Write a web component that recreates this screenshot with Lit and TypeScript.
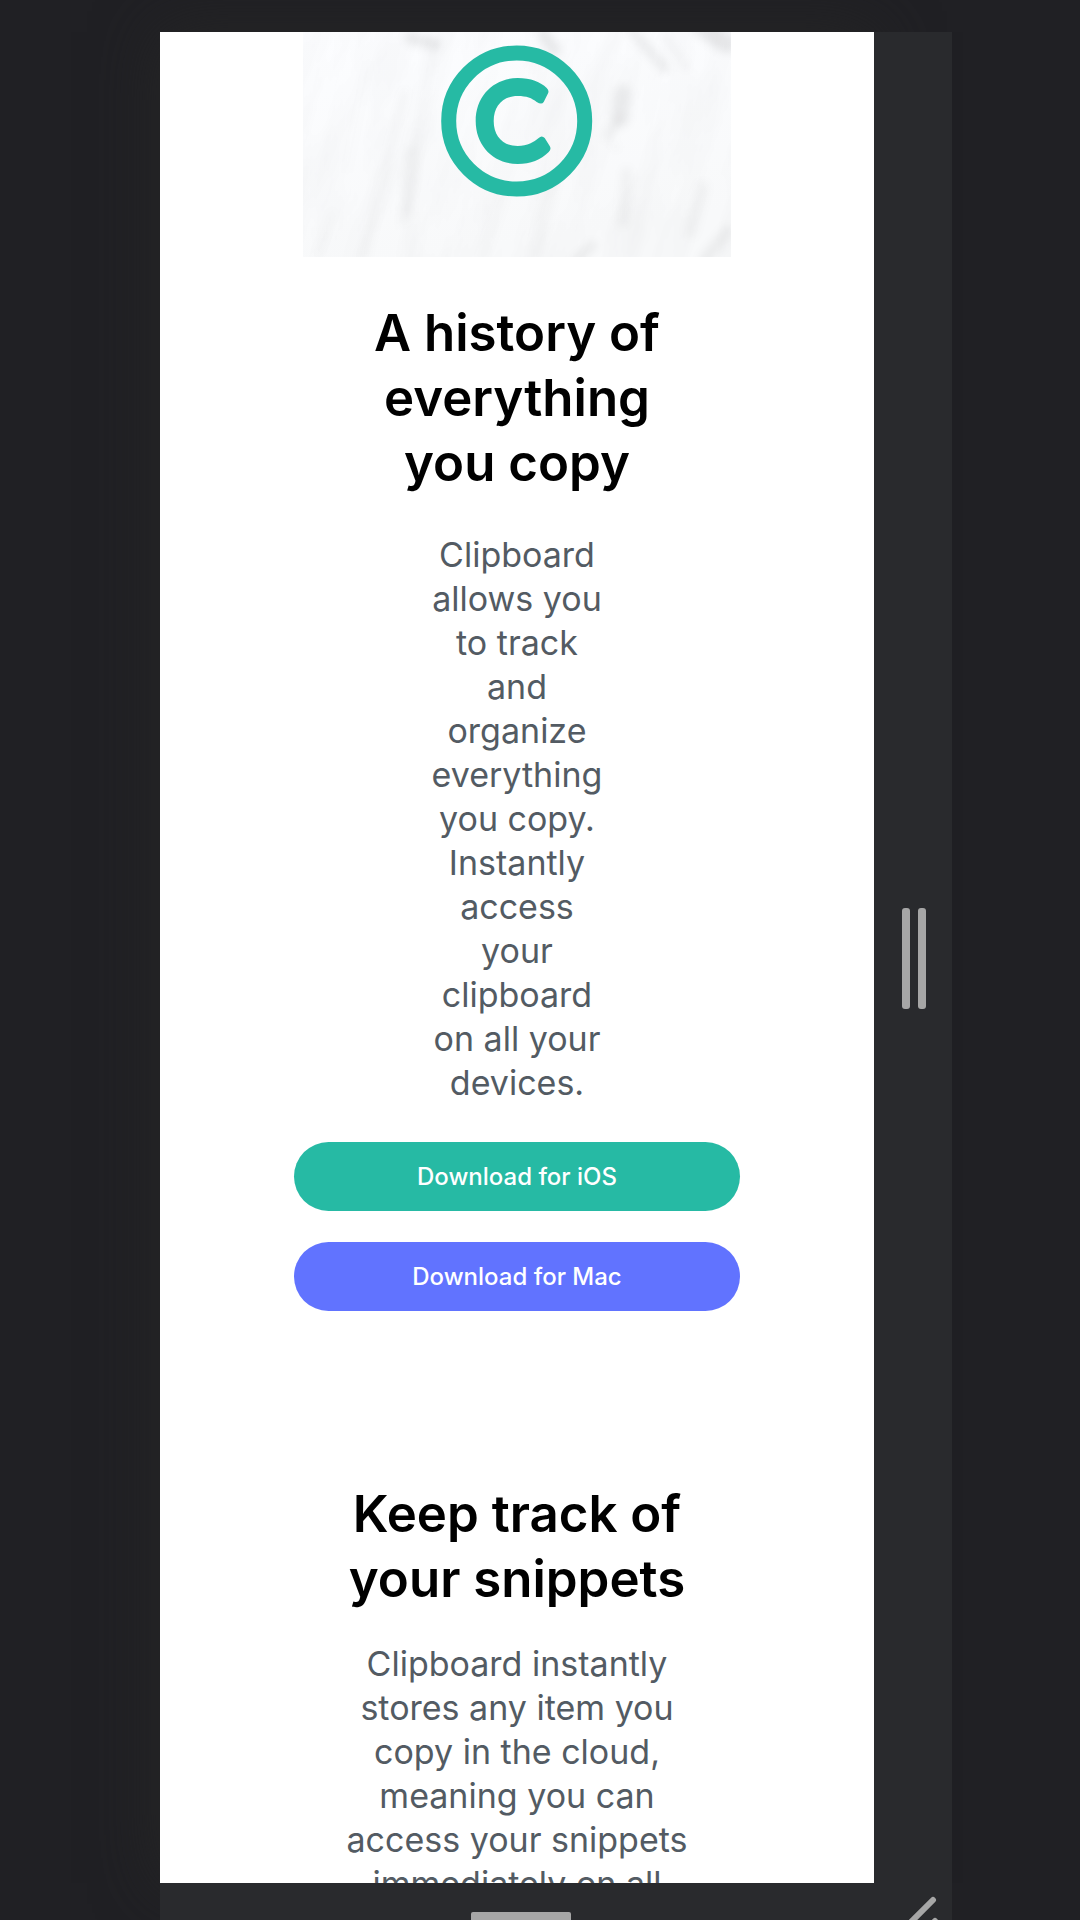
import { LitElement, html, css, svg } from "lit";
import { customElement } from "lit/decorators.js";

const heroLines = ["A history of", "everything", "you copy"];
const introLines = [
  "Clipboard", "allows you", "to track", "and", "organize", "everything", "you copy.",
  "Instantly", "access", "your", "clipboard", "on all your", "devices.",
];
const trackLines = ["Keep track of", "your snippets"];
const trackCopy = [
  "Clipboard instantly", "stores any item you", "copy in the cloud,",
  "meaning you can", "access your snippets", "immediately on all",
];

const lines = (items: string[]) => items.map((t, i) => (i ? html`<br />${t}` : t));

// Brush marks of the marble backdrop: x1, y1, x2, y2, width, opacity.
const streaks: [number, number, number, number, number, number][] = [
  [108, 6, 132, 12, 12, 0.07],
  [132, 10, 102, 190, 5, 0.03],
  [102, 60, 62, 225, 6, 0.03],
  [66, 30, 44, 140, 3, 0.025],
  [108, 120, 104, 180, 12, 0.025],
  [240, 2, 252, 18, 12, 0.07],
  [226, 20, 230, 36, 4, 0.04],
  [330, 0, 362, 36, 10, 0.06],
  [362, 4, 384, 36, 5, 0.04],
  [400, -4, 424, 12, 18, 0.08],
  [320, 62, 318, 86, 18, 0.05],
  [318, 86, 304, 104, 10, 0.035],
  [313, 113, 313, 117, 3, 0.07],
  [324, 140, 320, 190, 10, 0.035],
  [400, 155, 388, 200, 12, 0.03],
  [290, 213, 272, 230, 8, 0.06],
  [425, 200, 402, 228, 12, 0.05],
  [30, 180, 14, 225, 5, 0.025],
  [250, 150, 232, 225, 12, 0.025],
  [200, 165, 180, 225, 10, 0.015],
];

@customElement("app-root")
export class AppRoot extends LitElement {
  static styles = css`
    :host {
      display: block;
      font-family: Inter, "Open Sans", sans-serif;
    }
    .stage {
      display: grid;
      grid-template-columns: 160fr 714fr 78fr 128fr;
      grid-template-rows: 32px minmax(0, 1fr) 37px;
      height: 100vh;
      overflow: hidden;
      background: #202024;
    }
    .screen {
      grid-area: 2 / 2;
      display: flex;
      flex-direction: column;
      align-items: center;
      min-height: 0;
      overflow: hidden;
      background: #fff;
      box-shadow: 0 0 60px #262626;
      text-align: center;
      white-space: nowrap;
    }
    .side {
      grid-area: 2 / 3;
      display: flex;
      align-items: center;
      justify-content: center;
      gap: 8px;
      padding: 2px 0 0 2px;
      background: #292a2d;
      z-index: 1;
    }
    .side i {
      width: 8px;
      height: 101px;
      border-radius: 3px;
      background: #a6a6a6;
    }
    .foot {
      grid-area: 3 / 2 / 4 / 4;
      display: grid;
      grid-template-columns: 722fr 70fr;
      background: #292a2d;
      z-index: 1;
      overflow: hidden;
    }
    .grip {
      justify-self: center;
      width: 100px;
      height: 8px;
      margin-top: 29px;
      border-radius: 2px 2px 0 0;
      background: #a6a6a6;
    }
    .corner {
      justify-self: center;
      width: 48px;
      height: 37px;
    }
    .picture {
      flex: none;
      display: block;
      width: 60%;
      height: 225px;
    }
    h1, h2, p {
      margin: 0;
      flex: none;
    }
    h1, h2 {
      font-size: 51px;
      line-height: 65px;
      font-weight: 600;
      color: #000;
    }
    p {
      font-size: 34px;
      line-height: 44px;
      color: #535b63;
    }
    h1 { margin-top: 43px; }
    .intro { margin-top: 38px; }
    h2 { margin-top: 170px; }
    .copy { margin-top: 31px; }
    .actions {
      flex: none;
      display: flex;
      flex-direction: column;
      gap: 31px;
      width: 446px;
      max-width: 90%;
      margin-top: 37px;
    }
    button {
      height: 69px;
      border: 0;
      border-radius: 35px;
      font: 500 24px/32px Inter, "Open Sans", sans-serif;
      color: #fff;
      cursor: pointer;
    }
    .ios { background: #26baa4; }
    .mac { background: #6173ff; }
  `;

  render() {
    return html`
      <div class="stage">
        <main class="screen">
          <svg class="picture" viewBox="0 0 429 225" preserveAspectRatio="xMidYMid slice" role="img" aria-label="Clipboard logo">
            <defs>
              <filter id="soft" filterUnits="userSpaceOnUse" x="-20" y="-20" width="470" height="270"><feGaussianBlur stdDeviation="4" /></filter>
              <filter id="grain" filterUnits="userSpaceOnUse" x="-200" y="-200" width="900" height="700">
                <feTurbulence type="fractalNoise" baseFrequency="0.03 0.008" numOctaves="5" seed="7" />
                <feColorMatrix values="0 0 0 0 0.4  0 0 0 0 0.4  0 0 0 0 0.42  0.15 0 0 0 -0.055" />
              </filter>
              <linearGradient id="base" x1="0" y1="0" x2="0.3" y2="1">
                <stop offset="0" stop-color="#fcfdff" />
                <stop offset="1" stop-color="#f8f9fa" />
              </linearGradient>
            </defs>
            <rect width="429" height="225" fill="url(#base)" />
            <g transform="rotate(16 214 112)">
              <rect x="-200" y="-200" width="900" height="700" filter="url(#grain)" />
            </g>
            <g filter="url(#soft)" stroke="#000" stroke-linecap="round">
              ${streaks.map(([x1, y1, x2, y2, w, o]) => svg`<line x1=${x1} y1=${y1} x2=${x2} y2=${y2} stroke-width=${w} stroke-opacity=${o} />`)}
            </g>
            <circle cx="214" cy="89" r="68" fill="none" stroke="#26baa4" stroke-width="15" />
            <path
              d="M215 46C228 46 238 50 244 56Q247 59 245 62L241 70Q239 73 234 70C229 66 224 64 215 64C200 64 191 74 191 89C191 104 200 114 215 114C225 114 231 110 236 106Q239 103 242 106L247 114Q249 117 246 120C238 128 228 132 215 132C191 132 173 114 173 89C173 64 191 46 215 46Z"
              fill="#26baa4"
            />
          </svg>
          <h1>${lines(heroLines)}</h1>
          <p class="intro">${lines(introLines)}</p>
          <div class="actions">
            <button class="ios" type="button">Download for iOS</button>
            <button class="mac" type="button">Download for Mac</button>
          </div>
          <h2>${lines(trackLines)}</h2>
          <p class="copy">${lines(trackCopy)}</p>
        </main>
        <div class="side"><i></i><i></i></div>
        <div class="foot">
          <div class="grip"></div>
          <svg class="corner" viewBox="0 0 48 37" fill="none" stroke="#a6a6a6" stroke-width="6" stroke-linecap="round">
            <path d="M40 17L10 47M42 38L34 46" />
          </svg>
        </div>
      </div>
    `;
  }
}
